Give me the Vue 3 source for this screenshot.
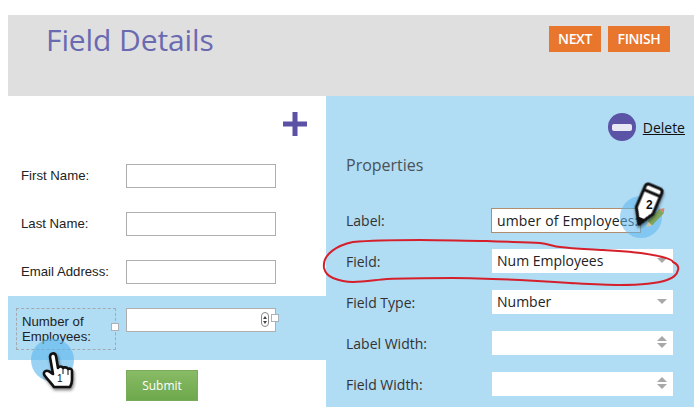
<script setup>
const leftRows = [
  { label: 'First Name:' },
  { label: 'Last Name:' },
  { label: 'Email Address:' }
]
const props = [
  { label: 'Field:', value: 'Num Employees', kind: 'select' },
  { label: 'Field Type:', value: 'Number', kind: 'select' },
  { label: 'Label Width:', value: '', kind: 'spin' },
  { label: 'Field Width:', value: '', kind: 'spin' }
]
</script>

<template>
  <div class="page">
    <header class="head">
      <h1 class="title">Field Details</h1>
      <div class="actions">
        <span class="btn next">NEXT</span>
        <span class="btn finish">FINISH</span>
      </div>
    </header>
    <main class="body">
      <section class="left">
        <div class="plus-wrap">
          <svg width="24" height="24" viewBox="0 0 24 24"><path d="M9.500 0h5v9.500H24v5h-9.500V24h-5v-9.500H0v-5h9.500z" fill="#5b51a5" /></svg>
        </div>
        <div v-for="r in leftRows" :key="r.label" class="frow">
          <span class="flabel">{{ r.label }}</span>
          <span class="finput"></span>
        </div>
        <div class="frow selected">
          <span class="flabel dashed">Number of<br />Employees:<i class="handle h1"></i></span>
          <span class="finput num">
            <span class="stepper"><i class="up"></i><i class="dn"></i></span>
            <i class="handle h2"></i>
          </span>
        </div>
        <div class="submit-row"><span class="submit">Submit</span></div>
      </section>
      <section class="right">
        <div class="delete-row">
          <span class="minus"><i></i></span>
          <a class="del">Delete</a>
        </div>
        <h2 class="ptitle">Properties</h2>
        <div class="prow first">
          <span class="plabel">Label:</span>
          <span class="pinput active">umber of Employees:</span>
        </div>
        <div v-for="p in props" :key="p.label" class="prow">
          <span class="plabel">{{ p.label }}</span>
          <span class="pinput">
            {{ p.value }}
            <i v-if="p.kind === 'select'" class="caret"></i>
            <span v-else class="pspin"><i class="up"></i><i class="dn"></i></span>
          </span>
        </div>
      </section>
    </main>

    <svg class="overlay" width="699" height="410" viewBox="0 0 699 410">
      <circle cx="52.500" cy="360" r="21.500" fill="#5cb6ee" fill-opacity=".62" />
      <circle cx="641" cy="217" r="21" fill="#5cb6ee" fill-opacity=".55" />
      <path d="M324 268C322 254 338 245 353 242C375 240 400 240 420 240C445 240 465 241 487 241C510 242 525 242 540 243C548 244 553 246 560 247C575 249 590 249 603 250C620 251 640 252 653 255C664 257 672 259 673 262C677 264 679 267 678 270C677 275 673 278 667 280C655 284 638 285 620 285C604 285 588 284 570 283C553 282 538 281 520 280C498 279 475 278 453 278C430 278 408 278 387 279C375 280 364 282 353 282C344 282 338 280 333 278C328 276 325 272 324 268Z" fill="none" stroke="#d5202b" stroke-width="2" />

      <!-- pencil -->
      <g transform="rotate(44 654 219)">
        <rect x="651" y="208" width="6" height="17" fill="#7fa55a" />
        <path d="M651 208l3-4 3 4z" fill="#d9826b" />
        <path d="M651 225l3 5 3-5z" fill="#d8c59c" />
      </g>
      <g transform="translate(-2 -1) rotate(23 649 206)" class="shadow">
        <path d="M640 189a3 3 0 0 1 3-3h12a3 3 0 0 1 3 3v23l-9 15-9-15z" fill="#fff" stroke="#111" stroke-width="3" stroke-linejoin="round" />
        <path d="M640 193h18" stroke="#111" stroke-width="3" />
        <path d="M645 220l4 7 4-7z" fill="#111" />
      </g>
      <text x="646" y="209" class="num-text">2</text>

      <!-- hand -->
      <path class="shadow" d="M50 357c0-4 5-5 6-1l2 12c1-2 4-2 5 0 1-1 4-1 5 1 2-1 4 0 4 2l0 9c0 3-1 5-2 7H54c-2-3-5-6-9-11-2-2-1-5 1-5 2-1 4 1 7 3z" fill="#fff" stroke="#111" stroke-width="2.600" stroke-linejoin="round" />
      <path d="M63 369v5M68 370v5" stroke="#111" stroke-width="1" />
      <text x="57" y="382" class="num-text small">1</text>
    </svg>
  </div>
</template>

<style>
html, body { margin: 0; background: #fff; }
</style>

<style scoped>
.page {
  position: relative;
  width: 699px;
  height: 410px;
  padding: 15px 5px 0 8px;
  box-sizing: border-box;
  overflow: hidden;
  font-family: "Open Sans", sans-serif;
}
.head {
  height: 81px;
  background: #dfdfe0;
  display: flex;
  justify-content: space-between;
  align-items: flex-start;
}
.title {
  margin: 5px 0 0 38px;
  font-size: 30px;
  line-height: 40px;
  font-weight: 400;
  color: #6a6ab0;
  letter-spacing: -.1px;
}
.actions {
  display: flex;
  gap: 7px;
  margin: 11px 24px 0 0;
}
.btn {
  height: 26px;
  line-height: 26px;
  background: #e8762d;
  color: #fff;
  font-size: 14px;
  font-weight: 600;
  letter-spacing: -.4px;
  text-align: center;
}
.next { width: 52px; }
.finish { width: 62px; }
.body { display: flex; height: 311px; }
.left {
  width: 318px;
  background: #fff;
  font-family: "Liberation Sans", Arial, sans-serif;
}
.plus-wrap {
  height: 68px;
  display: flex;
  justify-content: flex-end;
  align-items: flex-start;
  padding: 16px 19px 0 0;
  box-sizing: border-box;
}
.frow {
  display: flex;
  height: 48px;
  box-sizing: border-box;
  align-items: flex-start;
}
.flabel {
  width: 118px;
  padding-left: 13px;
  box-sizing: border-box;
  font-size: 13.200px;
  line-height: 24px;
  color: #222;
}
.finput {
  position: relative;
  width: 150px;
  height: 24px;
  background: #fff;
  border: 1px solid #aeaeae;
  box-sizing: border-box;
}
.selected {
  height: 64px;
  margin-top: -12px;
  margin-bottom: 10px;
  padding-top: 12px;
  background: #b0dcf4;
}
.dashed {
  position: relative;
  width: 100px;
  height: 42px;
  margin: 0 10px 0 8px;
  padding: 5px 0 0 5px;
  border: 1px dashed #a3a9ad;
  line-height: 15px;
  font-size: 13.200px;
}
.handle {
  position: absolute;
  width: 8px;
  height: 8px;
  box-sizing: border-box;
  background: #fff;
  border: 1px solid #a9b2b8;
}
.h1 { right: -4px; top: 14px; }
.h2 { right: -4px; top: 5px; }
.stepper {
  position: absolute;
  right: 6px;
  top: 3px;
  width: 8px;
  height: 15px;
  box-sizing: border-box;
  border: 1px solid #888;
  border-radius: 4px;
  display: flex;
  flex-direction: column;
  align-items: center;
  justify-content: center;
  gap: 2px;
}
.stepper .up, .stepper .dn { width: 0; height: 0; border-left: 2px solid transparent; border-right: 2px solid transparent; }
.stepper .up { border-bottom: 3px solid #444; }
.stepper .dn { border-top: 3px solid #444; }
.submit-row { padding-left: 118px; }
.submit {
  display: block;
  width: 72px;
  height: 31px;
  line-height: 30px;
  text-align: center;
  color: #fff;
  font-family: "Open Sans", sans-serif;
  font-size: 12px;
  background: linear-gradient(#88bb66, #6ea84c);
  border: 1px solid #79ab5a;
  box-sizing: border-box;
}
.right {
  width: 368px;
  height: 311px;
  background: #b0dcf4;
  padding-left: 20px;
  box-sizing: border-box;
}
.delete-row {
  display: flex;
  justify-content: flex-end;
  align-items: center;
  gap: 7px;
  height: 28px;
  margin-top: 17px;
  padding-right: 9px;
}
.minus {
  width: 28px;
  height: 28px;
  border-radius: 50%;
  background: #5b53a6;
  display: flex;
  align-items: center;
  justify-content: center;
}
.minus i {
  height: 7px;
  width: 20px;
  background: #e8e8f4;
  border-radius: 2px;
}
.del {
  font-size: 14px;
  color: #111;
  text-decoration: underline;
}
.ptitle {
  margin: 12px 0 0;
  font-size: 16px;
  line-height: 24px;
  font-weight: 400;
  color: #4a5257;
}
.prow {
  display: flex;
  align-items: center;
  height: 24px;
  margin-top: 17px;
}
.prow.first { margin-top: 31px; height: 25px; margin-bottom: -1px; }
.plabel {
  width: 146px;
  font-size: 14px;
  color: #333;
}
.pinput {
  position: relative;
  width: 181px;
  height: 24px;
  line-height: 23px;
  padding-left: 5px;
  box-sizing: border-box;
  background: #fff;
  font-size: 14px;
  color: #222;
}
.active {
  width: 150px;
  height: 25px;
  margin-left: -1px;
  border: 1px solid #b08d6c;
  padding-left: 5px;
  white-space: nowrap;
  overflow: hidden;
  letter-spacing: .15px;
}
.caret {
  position: absolute;
  right: 6px;
  top: 9px;
  width: 0;
  height: 0;
  border-left: 5px solid transparent;
  border-right: 5px solid transparent;
  border-top: 5px solid #a8a8a8;
}
.pspin {
  position: absolute;
  right: 6px;
  top: 5px;
  display: flex;
  flex-direction: column;
  gap: 2px;
}
.pspin .up, .pspin .dn {
  width: 0; height: 0;
  border-left: 5px solid transparent;
  border-right: 5px solid transparent;
}
.pspin .up { border-bottom: 5px solid #a8a8a8; }
.pspin .dn { border-top: 5px solid #a8a8a8; }
.overlay {
  position: absolute;
  left: 0;
  top: 0;
  pointer-events: none;
}
.shadow { filter: drop-shadow(1px 2px 1.500px rgba(0,0,0,.5)); }
.num-text {
  font-family: "Liberation Sans", Arial, sans-serif;
  font-size: 12px;
  font-weight: 700;
  fill: #111;
}
.num-text.small { font-weight: 400; font-size: 10px; }
</style>
